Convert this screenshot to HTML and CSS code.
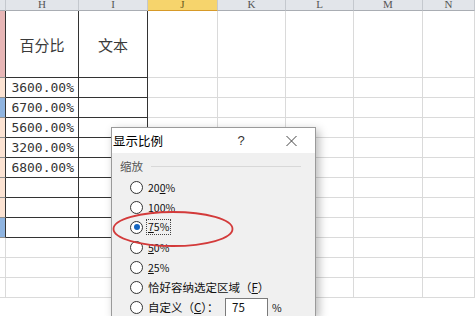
FILE: index.html
```html
<!DOCTYPE html>
<html lang="zh-CN">
<head>
<meta charset="utf-8">
<title>显示比例</title>
<link rel="stylesheet" href="styles.css">
</head>
<body>
<div class="sheet">
  <div class="h"></div><div class="h">H</div><div class="h">I</div><div class="h sel">J</div><div class="h">K</div><div class="h">L</div><div class="h">M</div><div class="h">N</div>

  <div class="c g pink"></div><div class="c t big">百分比</div><div class="c t big">文本</div><div class="c"></div><div class="c"></div><div class="c"></div><div class="c"></div><div class="c"></div>

  <div class="c g peach"></div><div class="c t num">3600.00%</div><div class="c t"></div><div class="c"></div><div class="c"></div><div class="c"></div><div class="c"></div><div class="c"></div>
  <div class="c g blue"></div><div class="c t num">6700.00%</div><div class="c t"></div><div class="c"></div><div class="c"></div><div class="c"></div><div class="c"></div><div class="c"></div>
  <div class="c g peach"></div><div class="c t num">5600.00%</div><div class="c t"></div><div class="c"></div><div class="c"></div><div class="c"></div><div class="c"></div><div class="c"></div>
  <div class="c g peach"></div><div class="c t num">3200.00%</div><div class="c t"></div><div class="c"></div><div class="c"></div><div class="c"></div><div class="c"></div><div class="c"></div>
  <div class="c g peach"></div><div class="c t num">6800.00%</div><div class="c t"></div><div class="c"></div><div class="c"></div><div class="c"></div><div class="c"></div><div class="c"></div>
  <div class="c g peach"></div><div class="c t"></div><div class="c t"></div><div class="c"></div><div class="c"></div><div class="c"></div><div class="c"></div><div class="c"></div>
  <div class="c g peach"></div><div class="c t"></div><div class="c t"></div><div class="c"></div><div class="c"></div><div class="c"></div><div class="c"></div><div class="c"></div>
  <div class="c g blue"></div><div class="c t"></div><div class="c t"></div><div class="c"></div><div class="c"></div><div class="c"></div><div class="c"></div><div class="c"></div>
  <div class="c"></div><div class="c"></div><div class="c"></div><div class="c"></div><div class="c"></div><div class="c"></div><div class="c"></div><div class="c"></div>
  <div class="c"></div><div class="c"></div><div class="c"></div><div class="c"></div><div class="c"></div><div class="c"></div><div class="c"></div><div class="c"></div>
  <div class="c"></div><div class="c"></div><div class="c"></div><div class="c"></div><div class="c"></div><div class="c"></div><div class="c"></div><div class="c"></div>
</div>

<div class="dialog">
  <div class="titlebar">
    <span class="title">显示比例</span>
    <span class="help">?</span>
    <svg class="close" width="11" height="10" viewBox="0 0 11 10"><path d="M0.5 0 L10.5 10 M10.5 0 L0.5 10" stroke="#444" stroke-width="1" fill="none"/></svg>
  </div>
  <div class="dbody">
    <div class="group"><span class="glabel">缩放</span><span class="gline"></span></div>
    <div class="opts">
      <div class="opt"><span class="radio"></span><span class="num">20<u>0</u>%</span></div>
      <div class="opt"><span class="radio"></span><span class="num"><u>1</u>00%</span></div>
      <div class="opt"><span class="radio on"></span><span class="num focus"><u>7</u>5%</span></div>
      <div class="opt"><span class="radio"></span><span class="num"><u>5</u>0%</span></div>
      <div class="opt"><span class="radio"></span><span class="num"><u>2</u>5%</span></div>
      <div class="opt"><span class="radio"></span><span>恰好容纳选定区域（<u>F</u>）</span></div>
      <div class="opt"><span class="radio"></span><span class="lbl">自定义（<u>C</u>）：</span><span class="input">75</span><span class="pct">%</span></div>
    </div>
  </div>
</div>

<svg class="mark" width="475" height="316" viewBox="0 0 475 316">
  <ellipse cx="173" cy="229" rx="59.5" ry="17" fill="none" stroke="#d33a3a" stroke-width="1.8"/>
</svg>
</body>
</html>
```

FILE: styles.css
```css
html, body {
  margin: 0;
  padding: 0;
}
body {
  width: 475px;
  height: 316px;
  overflow: hidden;
  position: relative;
  background: #ffffff;
}

.sheet {
  display: grid;
  grid-template-columns: 6px 73px 69px 70px 68px 68px 69px 52px;
  grid-template-rows: 11px 67px repeat(11, 20px) 18px;
}
.sheet > div {
  box-sizing: border-box;
}

.h {
  background: #e2e5ea;
  border-right: 1px solid #c4c8ce;
  border-bottom: 1px solid #a9adb3;
  display: flex;
  justify-content: center;
  align-items: flex-end;
  overflow: hidden;
  font-family: "Liberation Serif", serif;
  font-size: 11px;
  line-height: 11px;
  color: #555;
}
.h.sel {
  background: #f6d46c;
  border-bottom: 1px solid #d79a28;
  color: #6b5a20;
}

.c {
  border-right: 1px solid #dadada;
  border-bottom: 1px solid #dadada;
}
.c.t {
  border-right-color: #333;
  border-bottom-color: #333;
}
.c.g {
  border-right-color: #333;
  border-bottom-color: #8f8f8f;
}
.pink { background: #e7b6b6; }
.peach { background: #fce3d3; }
.blue { background: #8fb4e0; }

.big {
  display: flex;
  align-items: center;
  justify-content: center;
  font-family: "Noto Sans CJK SC", sans-serif;
  font-size: 15px;
  color: #3a3a3a;
}
.c.num {
  text-align: right;
  padding-right: 4px;
  font-family: "DejaVu Sans Mono", monospace;
  font-size: 13px;
  line-height: 19px;
  color: #333;
}

.dialog {
  position: absolute;
  left: 111px;
  top: 127px;
  width: 205px;
  height: 189px;
  box-sizing: border-box;
  border: 1px solid #9a9a9a;
  border-bottom: none;
  background: #f0f0f0;
  box-shadow: 3px 3px 9px rgba(0, 0, 0, 0.28);
  font-family: "Noto Sans CJK SC", sans-serif;
  color: #111;
  overflow: hidden;
}
.titlebar {
  height: 25px;
  background: #ffffff;
  display: flex;
  align-items: center;
  padding-left: 1px;
}
.title {
  font-size: 12.5px;
  color: #000;
}
.help {
  margin-left: auto;
  width: 10px;
  text-align: center;
  font-family: "Liberation Sans", sans-serif;
  font-size: 13px;
  color: #333;
}
.close {
  margin-left: 40px;
  margin-right: 18px;
  display: block;
}

.dbody {
  padding: 5px 0 0 8px;
}
.group {
  display: flex;
  align-items: center;
  height: 16px;
  margin-bottom: 3px;
}
.glabel {
  font-size: 11.5px;
  color: #555;
}
.gline {
  flex: none;
  width: 150px;
  height: 1px;
  background: #d8d8d8;
  margin-left: 8px;
}
.opts {
  padding-left: 10px;
}
.opt {
  display: flex;
  align-items: center;
  height: 20px;
  font-size: 11.5px;
  color: #111;
}
.radio {
  flex: none;
  width: 13px;
  height: 13px;
  box-sizing: border-box;
  border: 1px solid #333;
  border-radius: 50%;
  background: #fff;
  margin-right: 5px;
  display: flex;
  align-items: center;
  justify-content: center;
}
.radio.on::after {
  content: "";
  width: 6px;
  height: 6px;
  border-radius: 50%;
  background: #1565c0;
}
.num {
  font-size: 10.5px;
}
.focus {
  border: 1px dotted #444;
  padding: 0 1px;
  line-height: 14px;
  margin-left: -2px;
}
.lbl {
  width: 77px;
  flex: none;
}
.input {
  width: 43px;
  height: 19px;
  box-sizing: border-box;
  border: 1px solid #7a7a7a;
  border-bottom: none;
  background: #fff;
  padding-left: 6px;
  line-height: 17px;
  font-size: 11.5px;
}
.pct {
  margin-left: 4px;
  font-size: 10.5px;
}

.mark {
  position: absolute;
  left: 0;
  top: 0;
  pointer-events: none;
}
```
